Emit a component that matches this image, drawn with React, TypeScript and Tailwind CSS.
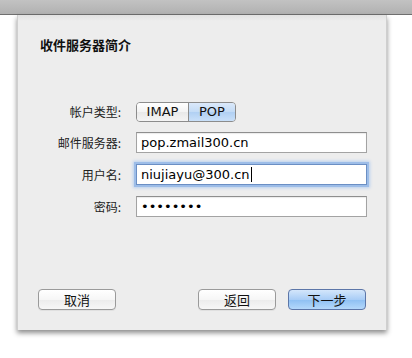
import React from 'react';

const ui = { fontFamily: '"DejaVu Sans", "Noto Sans CJK SC", sans-serif' };
const cjk = { fontFamily: '"Noto Sans CJK SC", "DejaVu Sans", sans-serif' };

const FieldRow: React.FC<{ label: string; children: React.ReactNode }> = ({ label, children }) => (
  <div className="flex items-center h-[21px]">
    <div className="w-[104px] text-right text-[12px] text-[#222] pr-[1px]" style={cjk}>
      {label}:
    </div>
    <div className="ml-[14px] flex items-center">{children}</div>
  </div>
);

const TextBox: React.FC<{ value: string; focused?: boolean; secret?: boolean }> = ({ value, focused, secret }) => (
  <div
    className={
      'w-[231px] h-[21px] bg-white border flex items-center pl-[4px] text-[13px] text-black ' +
      (focused
        ? 'border-[#6b8fc4] shadow-[0_0_0_2px_#9dbde8,0_0_3px_3px_#b9d0ef]'
        : 'border-[#a3a3a3] border-t-[#8e8e8e] shadow-[inset_0_1px_1px_rgba(0,0,0,0.08)]')
    }
    style={ui}
  >
    {secret ? <span className="text-[13px]">{value}</span> : <span>{value}</span>}
    {focused && <span className="w-px h-[15px] bg-black ml-[1px]" />}
  </div>
);

const Button: React.FC<{ label: string; primary?: boolean; className?: string }> = ({ label, primary, className }) => (
  <div
    className={
      'w-[78px] h-[21px] rounded-[4px] border flex items-center justify-center text-[13px] text-[#111] ' +
      (primary
        ? 'border-[#5c76a8] bg-[linear-gradient(#d4e6fb,#a9cdf6_50%,#8ec0f3_52%,#b4d8fb)]'
        : 'border-[#9a9a9a] bg-[linear-gradient(#ffffff,#f6f6f6_50%,#ececec_52%,#f7f7f7)] shadow-[0_1px_0_rgba(0,0,0,0.05)]') +
      ' ' +
      (className || '')
    }
    style={cjk}
  >
    {label}
  </div>
);

export default function App() {
  return (
    <div className="w-[412px] h-[358px] bg-white overflow-hidden">
      {/* window toolbar strip */}
      <div className="h-[15px] bg-[linear-gradient(#c2c2c2,#b1b1b1)] border-b border-[#6f6f6f]" />

      {/* sheet */}
      <div className="ml-[17px] w-[370px] h-[315px] flex flex-col bg-[linear-gradient(#e2e2e2,#ededed_6px)] border-x border-[#cfcfcf] shadow-[0_3px_5px_rgba(0,0,0,0.45)]">
        <div className="pl-[22px] pt-[22px] text-[13px] font-bold text-[#111] leading-[16px]" style={cjk}>
          收件服务器简介
        </div>

        <div className="mt-[48px] flex flex-col">
          <FieldRow label="帐户类型">
            <div className="flex h-[20px] rounded-[4px] border border-[#8c8c8c] overflow-hidden text-[13px] text-[#111]" style={ui}>
              <div className="w-[52px] flex items-center justify-center bg-[linear-gradient(#ffffff,#f3f3f3_50%,#e9e9e9_52%,#f4f4f4)] border-r border-[#8c8c8c]">
                IMAP
              </div>
              <div className="w-[46px] flex items-center justify-center bg-[linear-gradient(#dbe9fa,#c3dbf6_50%,#b1d0f3_52%,#c9e0f9)]">
                POP
              </div>
            </div>
          </FieldRow>
          <div className="mt-[10px]">
            <FieldRow label="邮件服务器">
              <TextBox value="pop.zmail300.cn" />
            </FieldRow>
          </div>
          <div className="mt-[11px]">
            <FieldRow label="用户名">
              <TextBox value="niujiayu@300.cn" focused />
            </FieldRow>
          </div>
          <div className="mt-[11px]">
            <FieldRow label="密码">
              <TextBox value="••••••••" secret />
            </FieldRow>
          </div>
        </div>

        {/* bottom buttons */}
        <div className="mt-auto mb-[20px] px-[20px] flex items-center">
          <Button label="取消" />
          <div className="flex-1" />
          <Button label="返回" />
          <Button label="下一步" primary className="ml-[12px]" />
        </div>
      </div>
    </div>
  );
}
